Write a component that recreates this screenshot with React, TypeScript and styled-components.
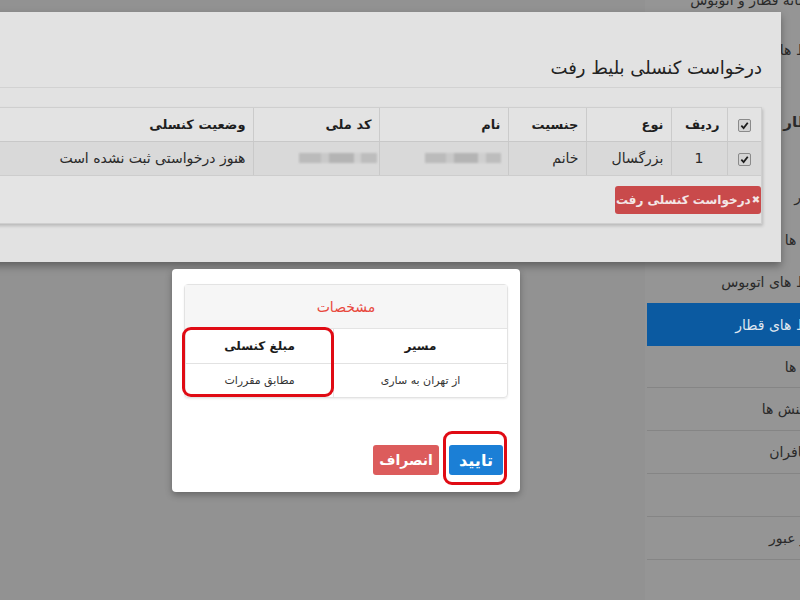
import styled, { createGlobalStyle } from "styled-components";

const GlobalStyle = createGlobalStyle`
  html, body {
    margin: 0;
    padding: 0;
    background: #929292;
  }
  body {
    font-family: "DejaVu Sans", "Noto Sans", sans-serif;
    direction: rtl;
  }
`;

interface SideItem {
  label: string;
  h: number;
  top?: number;
  bold?: boolean;
  active?: boolean;
  line?: boolean;
}

const sideItems: SideItem[] = [
  { label: "سامانه قطار و اتوبوس", h: 24 },
  { label: "بلیط ها", h: 76 },
  { label: "قطار", h: 68, bold: true },
  { label: "اخبار", h: 64, top: 18 },
  { label: "پیام ها", h: 40 },
  { label: "بلیط های اتوبوس", h: 43 },
  { label: "بلیط های قطار", h: 43, active: true },
  { label: "پیام ها", h: 42, line: true },
  { label: "تراکنش ها", h: 43, line: true },
  { label: "مسافران", h: 43, line: true },
  { label: "", h: 43, line: true },
  { label: "رمز عبور", h: 43, line: true },
];

const passengers = [
  { row: "1", kind: "بزرگسال", gender: "خانم", status: "هنوز درخواستی ثبت نشده است" },
];

function Check() {
  return (
    <CheckBox>
      <svg width="9" height="9" viewBox="0 0 10 10">
        <path d="M1.5 5.2 L4 7.8 L8.6 2" fill="none" stroke="#1c1c1c" strokeWidth="2" />
      </svg>
    </CheckBox>
  );
}

export default function App() {
  return (
    <>
      <GlobalStyle />
      <Page>
        <Sidebar>
          {sideItems.map((item, i) => (
            <SideLink
              key={i}
              $h={item.h}
              $top={item.top ?? 0}
              $bold={item.bold}
              $active={item.active}
              $line={item.line}
            >
              {item.label}
            </SideLink>
          ))}
        </Sidebar>

        <CancelModal>
          <ModalTitle>درخواست کنسلی بلیط رفت</ModalTitle>
          <ModalBody>
            <TablePanel>
              <Table>
                <thead>
                  <tr>
                    <Th $w={34} $center>
                      <Check />
                    </Th>
                    <Th $w={56}>ردیف</Th>
                    <Th $w={85}>نوع</Th>
                    <Th $w={78}>جنسیت</Th>
                    <Th $w={129}>نام</Th>
                    <Th $w={126}>کد ملی</Th>
                    <Th>وضعیت کنسلی</Th>
                  </tr>
                </thead>
                <tbody>
                  {passengers.map((p) => (
                    <tr key={p.row}>
                      <Td $center>
                        <Check />
                      </Td>
                      <Td $center>{p.row}</Td>
                      <Td>{p.kind}</Td>
                      <Td>{p.gender}</Td>
                      <Td>
                        <Blurred $w={76} $right={0} />
                      </Td>
                      <Td>
                        <Blurred $w={78} $right={-5} />
                      </Td>
                      <Td $status>{p.status}</Td>
                    </tr>
                  ))}
                </tbody>
              </Table>
              <PanelFooter>
                <DangerButton>
                  <span>✖</span>درخواست کنسلی رفت
                </DangerButton>
              </PanelFooter>
            </TablePanel>
          </ModalBody>
        </CancelModal>

        <ConfirmDialog>
          <InfoPanel>
            <InfoHeader>مشخصات</InfoHeader>
            <InfoTable>
              <thead>
                <tr>
                  <InfoTh $w={173}>مسیر</InfoTh>
                  <InfoTh>مبلغ کنسلی</InfoTh>
                </tr>
              </thead>
              <tbody>
                <tr>
                  <InfoTd>از تهران به ساری</InfoTd>
                  <InfoTd>مطابق مقررات</InfoTd>
                </tr>
              </tbody>
            </InfoTable>
            <Highlight $top={42} $right={173} $w={152} $h={70} />
          </InfoPanel>
          <Actions>
            <ConfirmWrap>
              <ActionButton $color="#1b7fd6" $w={54} $size={16}>
                تایید
              </ActionButton>
              <Highlight $top={-14} $right={-4} $w={64} $h={54} />
            </ConfirmWrap>
            <ActionButton $color="#dc5c5c" $w={66} $size={14}>
              انصراف
            </ActionButton>
          </Actions>
        </ConfirmDialog>
      </Page>
    </>
  );
}

const Page = styled.div`
  position: relative;
  width: 800px;
  height: 600px;
  overflow: hidden;
  display: flex;
  background: #929292;
`;

const Sidebar = styled.nav`
  width: 195px;
  margin-right: -40px;
  margin-top: -12px;
  display: flex;
  flex-direction: column;
  background: #959595;
`;

const SideLink = styled.div<{
  $h: number;
  $top: number;
  $bold?: boolean;
  $active?: boolean;
  $line?: boolean;
}>`
  height: ${(p) => p.$h}px;
  box-sizing: border-box;
  display: flex;
  align-items: center;
  padding: ${(p) => p.$top}px 18px 0 0;
  font-size: ${(p) => (p.$bold ? 15 : 14)}px;
  font-weight: ${(p) => (p.$bold ? 700 : 400)};
  color: ${(p) => (p.$active ? "#dfe6ef" : "#2a2a2a")};
  background: ${(p) => (p.$active ? "#0b5aa1" : "transparent")};
  border-bottom: ${(p) => (p.$line ? "1px solid #858585" : "none")};
  margin-left: 2px;
  white-space: nowrap;
`;

const CancelModal = styled.section`
  position: absolute;
  top: 12px;
  left: -200px;
  right: 19px;
  height: 250px;
  background: #e2e2e2;
  box-shadow: 0 4px 8px rgba(0, 0, 0, 0.35);
  display: flex;
  flex-direction: column;
`;

const ModalTitle = styled.h2`
  margin: 0;
  height: 76px;
  box-sizing: border-box;
  padding: 45px 19px 0 0;
  font-size: 18px;
  font-weight: 400;
  color: #222;
  border-bottom: 1px solid #d2d2d2;
`;

const ModalBody = styled.div`
  padding: 19px 19px 0 0;
`;

const TablePanel = styled.div`
  background: #e4e4e4;
  border: 1px solid #cfcfcf;
  border-left: none;
  box-shadow: 1px 2px 3px rgba(0, 0, 0, 0.18);
`;

const Table = styled.table`
  width: 100%;
  table-layout: fixed;
  border-collapse: collapse;
  color: #1e1e1e;
`;

const Th = styled.th<{ $w?: number; $center?: boolean }>`
  width: ${(p) => (p.$w ? `${p.$w}px` : "auto")};
  box-sizing: border-box;
  height: 33px;
  padding: 0 7px;
  text-align: ${(p) => (p.$center ? "center" : "right")};
  font-size: 13px;
  font-weight: 700;
  background: #e3e3e3;
  border-left: 1px solid #cbcbcb;
  border-bottom: 1px solid #c8c8c8;
  white-space: nowrap;
`;

const Td = styled.td<{ $center?: boolean; $status?: boolean }>`
  height: 33px;
  padding: 0 7px;
  text-align: ${(p) => (p.$center ? "center" : "right")};
  font-size: 14px;
  color: #2a2a2a;
  background: #d9d9d9;
  border-left: 1px solid #c9c9c9;
  border-bottom: 1px solid #cdcdcd;
  white-space: nowrap;
`;

const CheckBox = styled.span`
  display: inline-flex;
  align-items: center;
  justify-content: center;
  width: 11px;
  height: 11px;
  border: 1px solid #8a8a8a;
  border-radius: 2px;
  background: #d4d4d4;
  vertical-align: middle;
`;

const Blurred = styled.span<{ $w: number; $right: number }>`
  display: block;
  width: ${(p) => p.$w}px;
  height: 10px;
  margin-right: ${(p) => p.$right}px;
  background: linear-gradient(
    to left,
    #bdbdbd 0 20%,
    #cfcfcf 20% 30%,
    #b4b4b4 30% 62%,
    #c9c9c9 62% 72%,
    #bbbbbb 72% 100%
  );
  filter: blur(1px);
`;

const PanelFooter = styled.div`
  height: 47px;
  box-sizing: border-box;
  padding: 10px 0 0 0;
  display: flex;
`;

const DangerButton = styled.button`
  height: 28px;
  width: 146px;
  border: none;
  border-radius: 3px;
  background: #c94a4b;
  color: #f3e6e6;
  font-family: inherit;
  font-size: 12px;
  font-weight: 700;
  display: flex;
  align-items: center;
  justify-content: center;
  gap: 1px;
  padding: 0;
  span {
    font-size: 10px;
  }
`;

const ConfirmDialog = styled.div`
  position: absolute;
  top: 269px;
  left: 172px;
  width: 348px;
  height: 223px;
  box-sizing: border-box;
  padding: 15px 12px 0 12px;
  background: #ffffff;
  border-radius: 4px;
  box-shadow: 0 3px 7px rgba(0, 0, 0, 0.3);
  display: flex;
  flex-direction: column;
`;

const InfoPanel = styled.div`
  position: relative;
  border: 1px solid #e3e3e3;
  border-radius: 4px;
  box-shadow: 0 1px 2px rgba(0, 0, 0, 0.08);
`;

const InfoHeader = styled.div`
  height: 43px;
  display: flex;
  align-items: center;
  justify-content: center;
  background: #f6f6f6;
  color: #e8483d;
  font-size: 14px;
  border-bottom: 1px solid #e4e4e4;
`;

const InfoTable = styled.table`
  width: 100%;
  table-layout: fixed;
  border-collapse: collapse;
`;

const InfoTh = styled.th<{ $w?: number }>`
  width: ${(p) => (p.$w ? `${p.$w}px` : "auto")};
  height: 34px;
  padding: 0;
  font-size: 12px;
  font-weight: 700;
  color: #1a1a1a;
  text-align: center;
  border-left: 1px solid #e2e2e2;
  border-bottom: 1px solid #e2e2e2;
`;

const InfoTd = styled.td`
  height: 33px;
  padding: 0;
  font-size: 11px;
  color: #333;
  text-align: center;
  border-left: 1px solid #e6e6e6;
`;

const Highlight = styled.div<{ $top: number; $right: number; $w: number; $h: number }>`
  position: absolute;
  top: ${(p) => p.$top}px;
  right: ${(p) => p.$right}px;
  width: ${(p) => p.$w}px;
  height: ${(p) => p.$h}px;
  box-sizing: border-box;
  border: 3px solid #e00b14;
  border-radius: 9px;
  pointer-events: none;
`;

const Actions = styled.div`
  display: flex;
  gap: 10px;
  margin-top: 47px;
  padding-right: 5px;
`;

const ConfirmWrap = styled.div`
  position: relative;
  display: flex;
`;

const ActionButton = styled.button<{ $color: string; $w: number; $size: number }>`
  width: ${(p) => p.$w}px;
  height: 30px;
  border: none;
  border-radius: 3px;
  padding: 0;
  background: ${(p) => p.$color};
  color: #ffffff;
  font-family: inherit;
  font-size: ${(p) => p.$size}px;
  font-weight: 700;
`;
